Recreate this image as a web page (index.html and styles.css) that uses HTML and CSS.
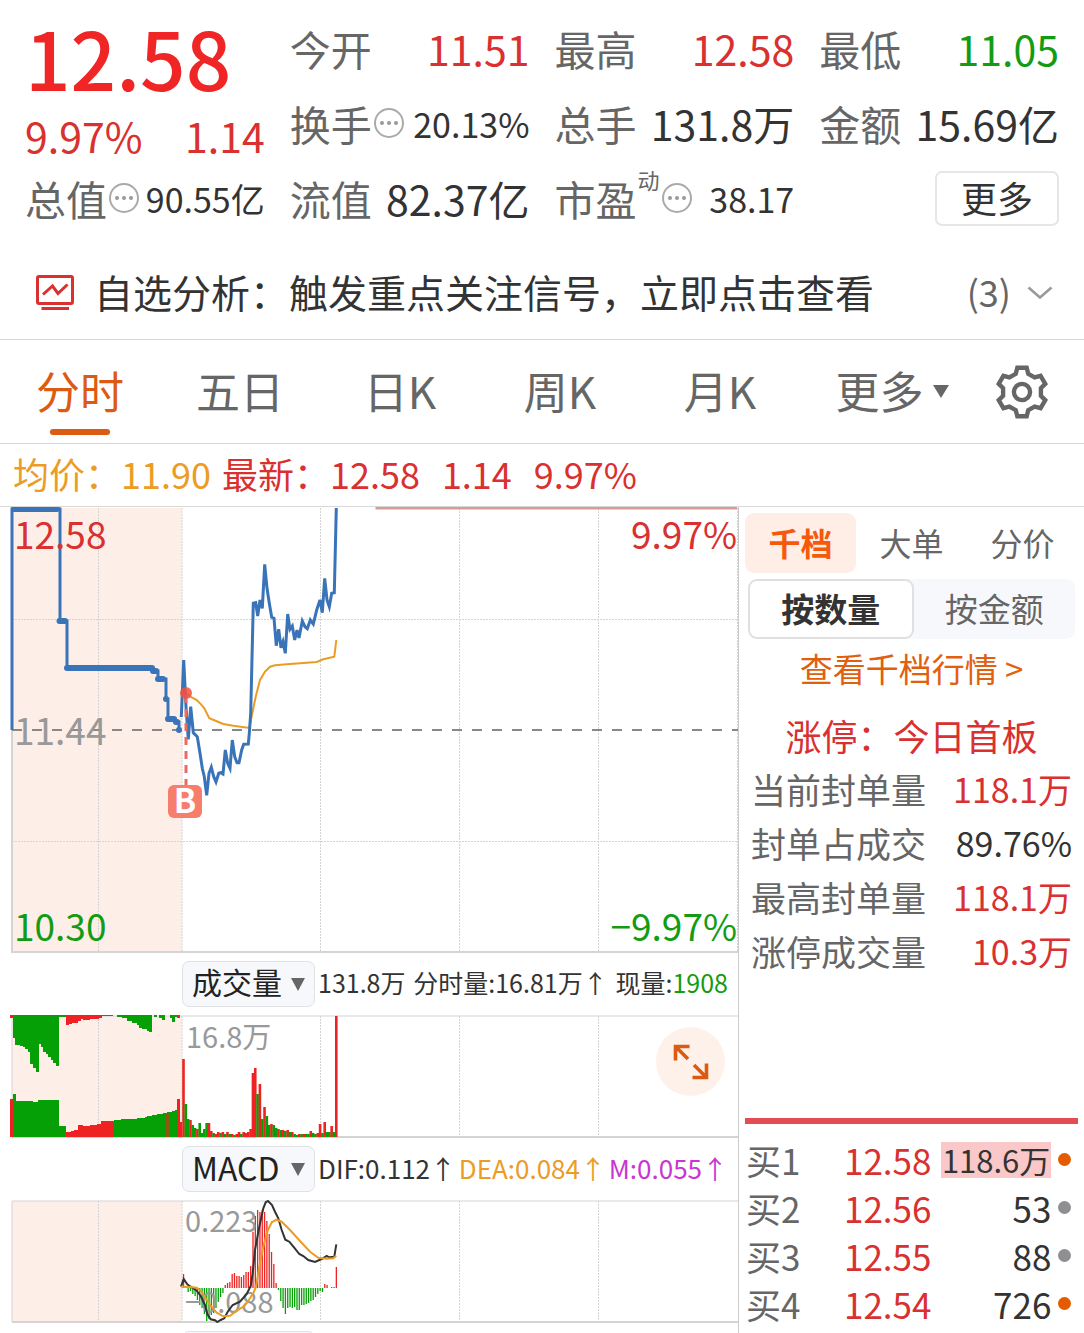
FILE: index.html
```
<!DOCTYPE html>
<html lang="zh-CN">
<head>
    <meta charset="UTF-8">
    <meta name="viewport" content="width=device-width, initial-scale=1.0">
    <title>分时行情</title>
    <link rel="stylesheet" href="styles.css">
</head>
<body>
    <div class="page">
        <header class="quote">
            <div class="price-box">
                <div class="price">12.58</div>
                <div class="change"><span>9.97%</span><span>1.14</span></div>
            </div>
            <div class="stat"><span class="name">今开</span><span class="red">11.51</span></div>
            <div class="stat"><span class="name">最高</span><span class="red">12.58</span></div>
            <div class="stat"><span class="name">最低</span><span class="green">11.05</span></div>
            <div class="stat"><span class="name">换手<i class="more-dot"></i></span><span class="small">20.13%</span></div>
            <div class="stat"><span class="name">总手</span><span>131.8万</span></div>
            <div class="stat"><span class="name">金额</span><span>15.69亿</span></div>
            <div class="stat"><span class="name">总值<i class="more-dot"></i></span><span class="small">90.55亿</span></div>
            <div class="stat"><span class="name">流值</span><span>82.37亿</span></div>
            <div class="stat"><span class="name">市盈<sup>动</sup><i class="more-dot"></i></span><span class="small">38.17</span></div>
            <div class="stat end"><button class="more-btn">更多</button></div>
        </header>

        <div class="notice">
            <svg class="notice-icon" width="38" height="36" viewBox="0 0 38 36" fill="none" stroke="#d93030">
                <rect x="1.5" y="1.5" width="35" height="27" rx="1.5" stroke-width="3"/>
                <path d="M7 19.5L16.5 11L22 18.5L31.5 9.5" stroke-width="3"/>
                <path d="M5.5 33.5H33" stroke-width="3"/>
            </svg>
            <span class="notice-text">自选分析：触发重点关注信号，立即点击查看</span>
            <span class="notice-count">(3)</span>
            <svg width="26" height="14" viewBox="0 0 26 14" fill="none" stroke="#999" stroke-width="2.5"><path d="M1.5 1.5L13 11.5L24.5 1.5"/></svg>
        </div>

        <nav class="tabs">
            <button class="tab active">分时</button>
            <button class="tab">五日</button>
            <button class="tab">日K</button>
            <button class="tab">周K</button>
            <button class="tab">月K</button>
            <button class="tab wide">更多<i class="tri"></i></button>
            <button class="gear" aria-label="设置">
                <svg width="54" height="54" viewBox="-26 -26 52 52" fill="none" stroke="#666" stroke-width="4.2">
                    <path d="M-6-17.5L-4.5-23.3H4.5L6-17.5L12.2-14L17.9-15.5L22.4-7.8L18.2-3.6V3.6L22.4 7.8L17.9 15.5L12.2 14L6 17.5L4.5 23.3H-4.5L-6 17.5L-12.2 14L-17.9 15.5L-22.4 7.8L-18.2 3.6V-3.6L-22.4-7.8L-17.9-15.5L-12.2-14Z"/>
                    <circle r="7.8"/>
                </svg>
            </button>
        </nav>

        <div class="summary">
            <span class="yellow">均价：11.90</span>
            <span class="red">最新：12.58</span>
            <span class="red">1.14</span>
            <span class="red">9.97%</span>
        </div>

        <main class="main">
            <section class="charts">
                <svg class="chart" viewBox="0 0 738 446">
                    <rect x="12" y="1" width="170" height="444" class="pre"/>
                    <path class="grid" d="M98.5 1V445M182 1V445M320.500 1V445M459.500 1V445M598.500 1V445M737.500 1V445M12 112.500H738M12 334.500H738"/>
                    <path class="axis" d="M12 1V445H738"/>
                    <path d="M375.500 1H737" stroke="#d99a9a" stroke-width="3"/>
                    <path d="M12 223H738" stroke="#888" stroke-width="2" stroke-dasharray="10 10"/>
                    <path class="line-blue" d="M12 223V2H60V114H67V161H153V164H158V172H166V192H168V212H175V215H179V223"/>
                    <path class="line-blue thick" d="M14 2H57M59.500 114H65M67 161H152M153 164H156M158 172H163M166 192V192M168 212H174M176 215H177M179 223V223"/>
                    <path d="M186 186L191.700 190.300L196.700 193L201 197.300L204.300 201.300L209.300 211.300L216.700 214.300L223.300 217L233.300 218.700L249.300 221L252.300 206.300L255.700 189.700L260 173L265 164.700L270 159.700L275 158.300L286.700 157.300L300 156.300L316.700 155L323.300 152.300L334.300 149.700L336.300 133" fill="none" stroke="#eb9c25" stroke-width="2"/>
                    <path class="line-blue" d="M181.300 210L183.700 153L186 199.700L188.300 232.300L190.700 199.700L193.300 225.700L197.300 229.700L200 246.300L202.300 261.300L204.300 269.700L206.700 288.300L209 266.300L211.300 260.300L213.700 269.700L216 275L218.700 266.300L220.700 265.700L223 267L225.300 243L227.700 256.300L230 261.300L232.300 233L234.700 249.700L237 255.700H239L241.700 243L243.700 237.300L248.300 237L249.300 226.300L250.700 206.300L253.300 96.300L255.700 95.700L257.700 109L260 93L262.300 101.300L264.700 57.300L267 81.300L269.300 96.300L271.700 110.300L274 111.300L276.300 138.700L278.700 122.300L281 140.700L283 134.700L285.300 146.300L287.700 107L290 122.300L292.300 119L294.700 133L297 123L299 131L302.300 114L305 119.700L307.300 121.700L310.300 113L313.300 117L316.700 103L320 93L322.300 105.700L324.700 71.300L327 93L329.300 99.700L331.700 86.300L334.300 85.700L336.300 1"/>
                    <path d="M186 188V278" stroke="#ec6a60" stroke-width="3" stroke-dasharray="8 6"/>
                    <circle cx="186" cy="186" r="6" fill="#f4513c" fill-opacity=".85"/>
                    <rect x="168" y="278" width="34" height="33" rx="6" fill="#f77d6c"/>
                    <text x="185" y="306" class="mark">B</text>
                    <text x="14" y="42" class="label red">12.58</text>
                    <text x="14" y="238" class="label grey">11.44</text>
                    <text x="14" y="434" class="label green">10.30</text>
                    <text x="737" y="42" class="label red right">9.97%</text>
                    <text x="737" y="434" class="label green right">−9.97%</text>
                </svg>

                <div class="strip">
                    <span class="picker"><select aria-label="副图指标一"><option>成交量</option></select></span>
                    <div class="figures"><span>131.8万</span><span>分时量:16.81万↑</span><span>现量:<b class="green">1908</b></span></div>
                </div>

                <div class="chart-wrap">
                    <svg class="chart" viewBox="0 0 738 123">
                        <rect x="12" y="1" width="170" height="121" class="pre"/>
                        <path class="grid" d="M98.5 1V122M182 1V122M320.500 1V122M459.500 1V122M598.500 1V122"/>
                        <path class="axis thin" d="M12 122V1H738"/>
                        <path class="axis" d="M12 122H738"/>
                        <!-- call auction: unmatched on top, matched below -->
                        <path class="up" d="M10 0V3H13V0ZM66 0V10H69V9H72V8H78V6H81V4H83V5H90V4H99V3H102V1H113V0ZM177 0V3H180V0ZM10 122V84H13V122ZM66 122V117H71V116H74V115H78V110H83V111H90V110H97V109H101V106H114V122ZM177 122V84H180V107H182V122Z"/>
                        <path class="down" d="M13 0V23H15V30H20V31H23V32H25V34H28V37H30V49H33V53H36V57H39V29H41V32H43V37H46V39H48V42H51V45H53V48H56V51H59V2H66V0ZM117 0V2H122V3H127V6H132V8H137V10H139V13H142V14H147V16H149V17H152V0ZM154 0V2H157V0ZM159 0V3H162V5H165V0ZM170 0V3H172V7H175V2H177V0ZM13 122V79H16V86H33V87H38V85H59V111H66V122ZM114 122V105H121V104H137V103H145V102H147V101H152V100H157V99H163V98H167V97H172V96H175V95H177V122Z"/>
                        <path class="dim" d="M166 98H169V122H166Z"/>
                        <g id="volume"></g>
                        <text x="186" y="33" class="label small grey">16.8万</text>
                    </svg>
                    <button class="expand" aria-label="全屏">
                        <svg width="36" height="36" viewBox="0 0 36 36" fill="none" stroke="#dd5a12" stroke-width="3.6"><path d="M2.500 16.500V2.500H16.500M3 3L15 15M33.500 19.500V33.500H19.500M33 33L21 21"/></svg>
                    </button>
                </div>

                <div class="strip">
                    <span class="picker"><select class="latin" aria-label="副图指标二"><option>MACD</option></select></span>
                    <div class="figures macd"><span>DIF:0.112↑</span><span class="yellow">DEA:0.084↑</span><span class="magenta">M:0.055↑</span></div>
                </div>

                <svg class="chart" viewBox="0 0 738 123">
                    <rect x="12" y="1" width="170" height="121" class="pre"/>
                    <path class="grid" d="M98.500 1V122M182 1V122M320.500 1V122M459.500 1V122M598.500 1V122"/>
                    <path class="axis thin" d="M12 122V1H738"/>
                    <path class="axis" d="M12 122H738"/>
                    <g id="macd"></g>
                    <text x="185" y="32" class="label small grey">0.223</text>
                    <text x="185" y="113" class="label small grey">−0.088</text>
                    <path class="curve" stroke="#333" d="M181 86.700L183.700 79L187.300 84.300L190.700 86.700L196.700 90.700L200.700 96L205 105L207.300 114L210.700 119.300L215 120.300L217.300 122L220.700 120L224.300 118.300L227.700 111.700L232.700 105L240 101.700L246.700 94L250.700 86L252.700 73.300L255 50L259.300 26.700L263.300 8.300L265.700 2.300L268 1L272 5L275 11.700L278.300 18.300L281.700 30L285.300 39.700L289.300 41.700L294 47.300L299.300 54L303.300 56L308.300 60L315 62L321.700 59L326.700 56L329.300 57.300L334.300 56.700L336.300 44.300"/>
                    <path class="curve" stroke="#eb9c25" d="M181 86.700L190 87L196.700 87.700L200.700 90.700L205 97.300L210 105L216.700 112.700L223.300 116.300L230 115.700L236.700 111L245 105.300L250 98.300L253.300 93.300L256 86.700L259.300 66.700L263.300 46.700L267.300 31.700L271.700 22.300L276.700 19.700L281.700 21.700L290 30L300 41L310 51.700L318.300 57.700L326.700 58.700L333.300 58.300L336.300 55.700"/>
                </svg>

                <div class="strip"><span class="picker"></span></div>
            </section>

            <aside class="side">
                <div class="side-tabs">
                    <button class="active">千档</button>
                    <button>大单</button>
                    <button>分价</button>
                </div>
                <div class="segment">
                    <button class="active">按数量</button>
                    <button>按金额</button>
                </div>
                <a class="link" href="#">查看千档行情 &gt;</a>
                <div class="limit red">涨停：今日首板</div>
                <dl class="orders">
                    <div><dt>当前封单量</dt><dd class="red">118.1万</dd></div>
                    <div><dt>封单占成交</dt><dd>89.76%</dd></div>
                    <div><dt>最高封单量</dt><dd class="red">118.1万</dd></div>
                    <div><dt>涨停成交量</dt><dd class="red">10.3万</dd></div>
                </dl>
                <table class="bids">
                    <tr><th>买1</th><td class="red">12.58</td><td><span class="hit">118.6万</span></td><td><i class="dot hot"></i></td></tr>
                    <tr><th>买2</th><td class="red">12.56</td><td>53</td><td><i class="dot"></i></td></tr>
                    <tr><th>买3</th><td class="red">12.55</td><td>88</td><td><i class="dot"></i></td></tr>
                    <tr><th>买4</th><td class="red">12.54</td><td>726</td><td><i class="dot hot"></i></td></tr>
                </table>
            </aside>
        </main>
    </div>

    <script src="script.js"></script>
</body>
</html>
```

FILE: styles.css
```
* {
    box-sizing: border-box;
}
body {
    margin: 0;
    background: #fff;
    color: #333;
    font-family: "Noto Sans CJK SC", sans-serif;
}
button, select {
    font-family: inherit;
    color: inherit;
    background: none;
    border: none;
    padding: 0;
    margin: 0;
    cursor: pointer;
}
.page {
    height: 100vh;
    overflow: hidden;
}
.red {
    color: #d93030;
    fill: #d93030;
}
.green {
    color: #139c13;
    fill: #139c13;
}
.yellow {
    color: #eb9c25;
}
.magenta {
    color: #c837cf;
}
.grey {
    fill: #999;
}

/* quote header */
.quote {
    display: grid;
    grid-template-columns: repeat(4, 1fr);
    grid-auto-rows: 75px;
    column-gap: 25px;
    padding: 11px 25px 0;
    font-size: 41px;
    line-height: 75px;
    white-space: nowrap;
}
.price-box {
    grid-row: span 2;
    color: #d93030;
}
.price {
    font-size: 80px;
    font-weight: 500;
    line-height: 91px;
    color: #f02525;
}
.change {
    display: flex;
    justify-content: space-between;
    line-height: 66px;
}
.stat {
    display: flex;
    justify-content: space-between;
}
.stat.end {
    justify-content: flex-end;
    align-items: center;
}
.name {
    display: flex;
    align-items: center;
    color: #666;
}
.name sup {
    align-self: flex-start;
    font-size: 22px;
    line-height: 36px;
    margin-left: 1px;
}
.small {
    font-size: 34px;
}
.more-dot {
    position: relative;
    width: 30px;
    height: 30px;
    margin: 0 0 2px 2px;
    border: 2px solid #aaa;
    border-radius: 50%;
}
.more-dot::after {
    content: "";
    position: absolute;
    left: 11px;
    top: 11px;
    width: 4px;
    height: 4px;
    border-radius: 50%;
    background: #999;
    box-shadow: -7px 0 #999, 7px 0 #999;
}
.more-btn {
    width: 124px;
    height: 55px;
    padding-bottom: 4px;
    border: 2px solid #e6e6e6;
    border-radius: 7px;
    font-size: 36px;
    line-height: 46px;
}

/* notice */
.notice {
    display: flex;
    align-items: center;
    height: 104px;
    padding: 10px 31px 0 36px;
    border-bottom: 1px solid #d8d8d8;
    font-size: 39px;
    line-height: 88px;
}
.notice-text {
    flex: 1;
    margin: 0 0 4px 20px;
}
.notice-count {
    margin: 0 16px 4px 0;
    color: #666;
    font-size: 36px;
}

/* period tabs */
.tabs {
    display: flex;
    height: 104px;
    padding-right: 24px;
    border-bottom: 1px solid #d8d8d8;
    color: #666;
}
.tab {
    position: relative;
    flex: 160;
    padding-bottom: 4px;
    font-size: 44px;
}
.tab.wide {
    flex: 184;
}
.tab.active {
    color: #dd5a12;
}
.tab.active::after {
    content: "";
    position: absolute;
    left: 50%;
    bottom: 8px;
    width: 60px;
    height: 6px;
    margin-left: -30px;
    border-radius: 3px;
    background: #dd5a12;
}
.tri {
    display: inline-block;
    margin: 0 0 11px 9px;
    border: 8px solid transparent;
    border-top: 13px solid #666;
    border-bottom: 0;
}
.gear {
    flex: 76;
}
.gear svg {
    display: block;
    margin: auto;
}

.summary {
    display: flex;
    height: 63px;
    padding: 0 13px;
    border-bottom: 1px solid #d8d8d8;
    font-size: 36px;
    line-height: 58px;
    white-space: nowrap;
    gap: 22px;
}
.summary .yellow {
    margin-right: -11px;
}

/* charts */
.main {
    display: grid;
    grid-template-columns: 739fr 345fr;
}
.charts {
    border-right: 1px solid #ccc;
}
.chart {
    display: block;
    width: 100%;
}
.pre {
    fill: #fdeee8;
}
.grid {
    stroke: #d4d4d4;
    stroke-dasharray: 2 1;
}
.axis {
    fill: none;
    stroke: #d4d4d4;
    stroke-width: 2;
}
.axis.thin {
    stroke-width: 1;
}
.line-blue {
    fill: none;
    stroke: #3a74b8;
    stroke-width: 3;
}
.line-blue.thick {
    stroke-width: 6;
    stroke-linecap: round;
}
.curve {
    fill: none;
    stroke-width: 2;
}
.up {
    fill: #ee2222;
}
.down {
    fill: #05a005;
}
.dim {
    fill: #8a5a10;
}
.label {
    font-size: 37px;
}
.label.small {
    font-size: 29px;
}
.label.right {
    text-anchor: end;
}
.mark {
    font-size: 33px;
    font-weight: 700;
    fill: #fff;
    text-anchor: middle;
}
.chart-wrap {
    position: relative;
}
.expand {
    position: absolute;
    right: 13px;
    top: 12px;
    width: 69px;
    height: 69px;
    border-radius: 50%;
    background: #fef1ea;
}
.expand svg {
    display: block;
    margin: auto;
}
.strip {
    display: flex;
    align-items: center;
    height: 62px;
    padding: 0 10px 0 182px;
}
.picker {
    position: relative;
    flex: none;
    width: 133px;
    height: 46px;
    border: 1px solid #e0e2e6;
    border-radius: 7px;
    background: #f7f8fb;
}
.picker select {
    appearance: none;
    width: 100%;
    height: 100%;
    padding: 0 0 6px 9px;
    font-size: 30px;
    line-height: 38px;
    color: #222;
}
.picker select.latin {
    padding-bottom: 4px;
    font-size: 32px;
}
.picker:has(select)::after {
    content: "";
    position: absolute;
    right: 9px;
    top: 16px;
    border: 7px solid transparent;
    border-top: 13px solid #666;
    border-bottom: 0;
    pointer-events: none;
}
.figures {
    display: flex;
    flex: 1;
    justify-content: space-between;
    margin: 0 0 4px 3px;
    font-size: 25px;
    white-space: nowrap;
}
.figures.macd {
    font-size: 26px;
}
.figures b {
    font-weight: 400;
}

/* order book */
.side {
    padding: 6px 6px 0;
}
.side-tabs, .segment {
    display: flex;
    height: 60px;
    margin-bottom: 6px;
    color: #666;
}
.side-tabs button, .segment button {
    flex: 1;
    padding-bottom: 2px;
    font-size: 32px;
    border-radius: 9px;
}
.side-tabs .active {
    background: #ffeee6;
    color: #f55a0c;
    font-weight: 700;
}
.segment {
    margin: 0 3px;
    border-radius: 9px;
    background: #f7f8fb;
}
.segment button {
    flex: 1 1 0;
    min-width: 0;
    font-size: 33px;
}
.segment .active {
    border: 2px solid #e0e0e0;
    background: #fff;
    color: #333;
    font-weight: 700;
}
.link {
    display: block;
    margin-bottom: 11px;
    color: #e0600f;
    font-size: 33px;
    line-height: 58px;
    text-align: center;
    text-decoration: none;
}
.limit {
    font-size: 36px;
    line-height: 54px;
    text-align: center;
}
.orders {
    margin: 0 6px 140px;
    line-height: 54px;
}
.orders div {
    display: flex;
    justify-content: space-between;
}
.orders dt {
    color: #666;
    font-size: 35px;
}
.orders dd {
    margin: 0;
    font-size: 34px;
}
.bids {
    width: 100%;
    table-layout: fixed;
    border-collapse: separate;
    border-spacing: 0;
    border-top: 6px solid #e34c50;
    padding-top: 12px;
    font-size: 35px;
    line-height: 48px;
    text-align: right;
}
.bids th, .bids td {
    width: 24%;
    height: 48px;
    padding: 0;
}
.bids th {
    padding-left: 1px;
    color: #666;
    font-weight: 400;
    text-align: left;
}
.bids td:nth-child(2) {
    width: 32%;
}
.bids td:nth-child(3) {
    width: 36%;
}
.bids td:last-child {
    width: 8%;
}
.hit {
    display: inline-block;
    padding: 0 1px;
    background: #fac8c8;
    font-size: 31px;
    line-height: 36px;
    vertical-align: 2px;
}
.dot {
    display: block;
    width: 13px;
    height: 13px;
    margin: -1px auto 0;
    border-radius: 50%;
    background: #8e8e93;
}
.dot.hot {
    background: #e65a00;
}
```

FILE: script.js
```
const NS = 'http://www.w3.org/2000/svg';

// one value per minute, sign gives the colour: + red, - green
const volume = [
    78, -33, -18, 17, -12, -9, 8, -14, -4, -8, -14, 14, 6, -4, 3, 5, -4, 5, -3, 5, -3, 3, -2, 3, 5, -3, 5, 4, 5, 8,
    64, 69, -43, 53, -18, 30, -21, -12, 13, -12, -9, 8, -7, 7, -6, 7, -5, 5, -3, -2, 3, -3, 3, -3, -3, 6, -4, -3, 4,
    13, -4, 15, -5, -5, 11, -5, 121
];
const macd = [
    14, 2, -4, -3, -6, -8, -12, -17, -20, -26, -33, -31, -27, -25, -20, -14, -9, -5, 3, 5, 6, 14, 15, 12, 12, 11, 13,
    16, 16, 22, 56, 72, 78, 76, 78, 76, 67, 54, 36, 24, 5, -2, -13, -20, -26, -20, -19, -20, -19, -22, -22, -17, -17,
    -16, -15, -13, -12, -9, -6, -3, -4, 4, 3, 0, 1, 1, 21
];

function addBar(group, x, y, width, height, cls) {
    const bar = document.createElementNS(NS, 'rect');
    bar.setAttribute('x', x);
    bar.setAttribute('y', y);
    bar.setAttribute('width', width);
    bar.setAttribute('height', height);
    bar.setAttribute('class', cls);
    group.appendChild(bar);
}

const volumeGroup = document.getElementById('volume');
volume.forEach((v, i) => {
    const h = Math.abs(v);
    addBar(volumeGroup, 182.2 + i * 2.315, 122 - h, 2.6, h, v > 0 ? 'up' : 'down');
});

const macdGroup = document.getElementById('macd');
macd.forEach((v, i) => {
    const h = Math.abs(v);
    addBar(macdGroup, 182.9 + i * 2.315, v > 0 ? 88 - h : 88, 1.3, h, v > 0 ? 'up' : 'down');
});
```
